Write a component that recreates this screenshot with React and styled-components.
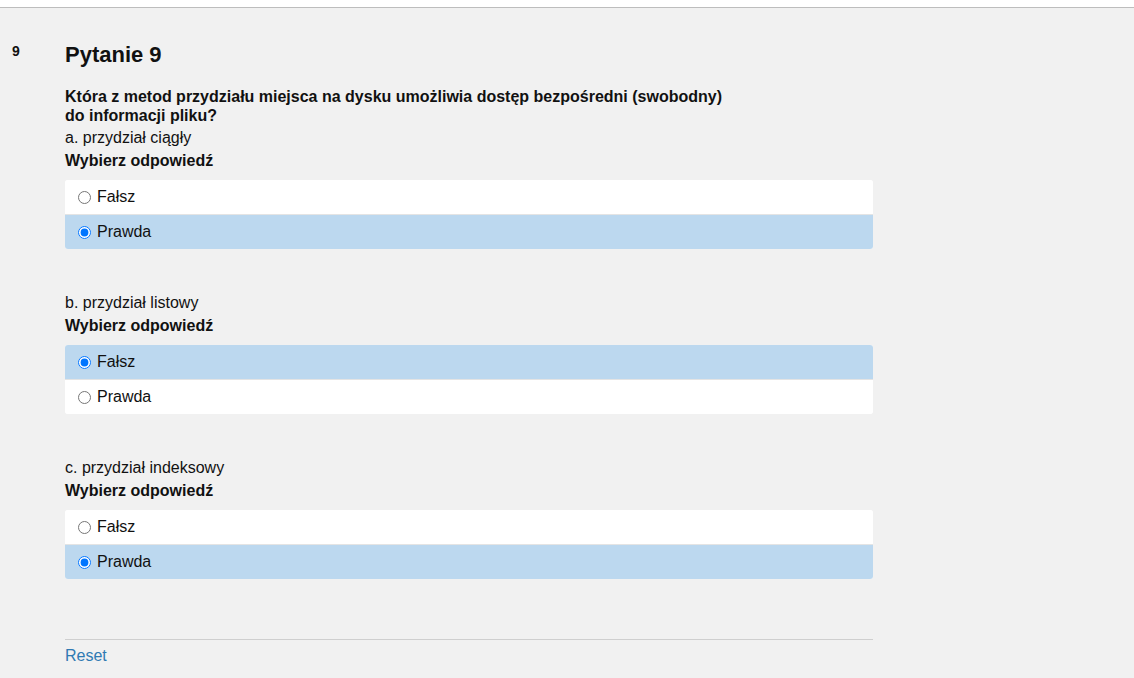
import React from "react";
import styled, { createGlobalStyle } from "styled-components";

const GlobalStyle = createGlobalStyle`
  html, body {
    margin: 0;
    padding: 0;
    background: #f1f1f1;
  }
  body {
    font-family: "Liberation Sans", Arial, sans-serif;
    color: #111;
  }
`;

const TopBar = styled.div`
  height: 7px;
  background: #fff;
  border-bottom: 1px solid #bdbdbd;
`;

const Main = styled.main`
  display: flex;
  align-items: flex-start;
  min-height: 670px;
`;

const NumberCol = styled.div`
  width: 53px;
  padding: 35px 0 0 12px;
  font-size: 14px;
  font-weight: bold;
  line-height: 16px;
`;

const Content = styled.div`
  width: 808px;
  padding-top: 34px;
`;

const Title = styled.h2`
  margin: 0;
  font-size: 22px;
  line-height: 26px;
  font-weight: bold;
`;

const QuestionText = styled.div`
  margin-top: 19px;
  font-size: 16px;
  line-height: 19px;
  font-weight: bold;
`;

const Part = styled.section`
  margin-top: ${(p) => (p.first ? "3px" : "44px")};
`;

const PartLabel = styled.div`
  font-size: 16px;
  line-height: 20px;
`;

const Prompt = styled.div`
  margin-top: 3px;
  font-size: 16px;
  line-height: 20px;
  font-weight: bold;
`;

const Options = styled.div`
  margin-top: 9px;
  background: #fff;
  border-radius: 3px;
  overflow: hidden;
`;

const Option = styled.label`
  display: flex;
  align-items: center;
  height: 34px;
  padding-left: 8px;
  font-size: 16px;
  background: ${(p) => (p.selected ? "#bcd8ef" : "#fff")};
  border-top: ${(p) => (p.divided ? "1px solid #e4e4e4" : "none")};

  input {
    width: 13px;
    height: 13px;
    margin: 0 6px 0 5px;
  }
`;

const Footer = styled.div`
  margin-top: 60px;
  border-top: 1px solid #cfcfcf;
  padding-top: 6px;
`;

const ResetLink = styled.a`
  font-size: 16px;
  line-height: 20px;
  color: #2f7ab3;
  text-decoration: none;
  cursor: pointer;
`;

const parts = [
  { key: "a", label: "a. przydział ciągły", answer: "Prawda" },
  { key: "b", label: "b. przydział listowy", answer: "Fałsz" },
  { key: "c", label: "c. przydział indeksowy", answer: "Prawda" },
];

export default function App() {
  return (
    <>
      <GlobalStyle />
      <TopBar />
      <Main>
        <NumberCol>9</NumberCol>
        <Content>
          <Title>Pytanie 9</Title>
          <QuestionText>
            Która z metod przydziału miejsca na dysku umożliwia dostęp bezpośredni (swobodny)
            <br />
            do informacji pliku?
          </QuestionText>
          {parts.map((part, i) => (
            <Part key={part.key} first={i === 0}>
              <PartLabel>{part.label}</PartLabel>
              <Prompt>Wybierz odpowiedź</Prompt>
              <Options>
                {["Fałsz", "Prawda"].map((opt, j) => (
                  <Option key={opt} selected={opt === part.answer} divided={j > 0}>
                    <input
                      type="radio"
                      name={"q9" + part.key}
                      defaultChecked={opt === part.answer}
                    />
                    {opt}
                  </Option>
                ))}
              </Options>
            </Part>
          ))}
          <Footer>
            <ResetLink>Reset</ResetLink>
          </Footer>
        </Content>
      </Main>
    </>
  );
}
